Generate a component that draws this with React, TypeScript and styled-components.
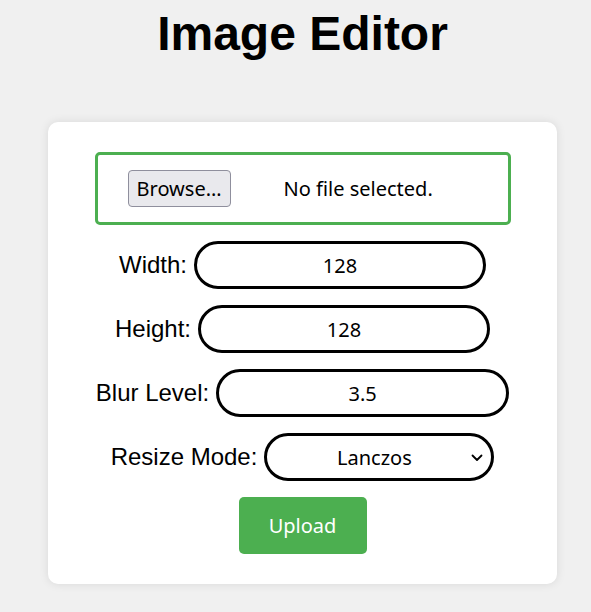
import React from "react";
import styled, { createGlobalStyle } from "styled-components";

const GlobalStyle = createGlobalStyle`
  html, body {
    margin: 0;
    padding: 0;
    background: #f0f0f0;
    font-family: "Liberation Sans", Arial, sans-serif;
  }
`;

const Page = styled.div`
  padding: 6px 0 30px 14px;
  box-sizing: border-box;
`;

const Title = styled.h1`
  margin: 0;
  font-size: 48px;
  line-height: 55px;
  font-weight: 700;
  text-align: center;
  color: #000;
`;

const Card = styled.form`
  width: 509px;
  margin: 61px auto 0;
  padding: 30px 0;
  box-sizing: border-box;
  background: #fff;
  border-radius: 10px;
  box-shadow: 0 0 10px rgba(0, 0, 0, 0.1);
  display: flex;
  flex-direction: column;
  align-items: center;
  gap: 16px;
`;

const FileBox = styled.div`
  width: 416px;
  height: 73px;
  box-sizing: border-box;
  border: 3px solid #4caf50;
  border-radius: 5px;
  display: flex;
  align-items: center;
  padding-left: 30px;
  font-family: "Noto Sans", sans-serif;
  font-size: 20px;
`;

const BrowseButton = styled.button`
  width: 103px;
  height: 37px;
  box-sizing: border-box;
  background: #e9e9ed;
  border: 1px solid #8f8f9d;
  border-radius: 4px;
  font-family: "Noto Sans", sans-serif;
  font-size: 20px;
  color: #000;
  padding: 0;
`;

const FileName = styled.span`
  margin-left: 53px;
  color: #000;
`;

const Row = styled.div`
  display: flex;
  align-items: center;
  gap: 7px;
`;

const Label = styled.label`
  font-size: 24px;
  color: #000;
`;

const TextInput = styled.input<{ $w: number }>`
  width: ${(p) => p.$w}px;
  height: 48px;
  box-sizing: border-box;
  border: 3px solid #000;
  border-radius: 24px;
  font-family: "Noto Sans", sans-serif;
  font-size: 20px;
  color: #000;
  text-align: center;
  padding: 0;
  outline: none;
  background: #fff;
`;

const SelectWrap = styled.div`
  position: relative;
`;

const Select = styled.select`
  width: 230px;
  height: 48px;
  box-sizing: border-box;
  border: 3px solid #000;
  border-radius: 24px;
  font-family: "Noto Sans", sans-serif;
  font-size: 20px;
  color: #000;
  background: #fff;
  appearance: none;
  -webkit-appearance: none;
  text-align: center;
  text-align-last: center;
  padding: 0 10px 0 0;
  outline: none;
`;

const Chevron = styled.svg`
  position: absolute;
  right: 11px;
  top: 21px;
  width: 12px;
  height: 8px;
  pointer-events: none;
`;

const UploadButton = styled.button`
  width: 128px;
  height: 57px;
  background: #4caf50;
  color: #fff;
  border: none;
  border-radius: 5px;
  font-family: "Noto Sans", sans-serif;
  font-size: 20px;
  padding: 0;
`;

export default function App() {
  return (
    <>
      <GlobalStyle />
      <Page>
        <Title>Image Editor</Title>
        <Card onSubmit={(e) => e.preventDefault()}>
          <FileBox>
            <BrowseButton type="button">Browse…</BrowseButton>
            <FileName>No file selected.</FileName>
          </FileBox>
          <Row>
            <Label>Width:</Label>
            <TextInput $w={292} defaultValue="128" />
          </Row>
          <Row>
            <Label>Height:</Label>
            <TextInput $w={292} defaultValue="128" />
          </Row>
          <Row>
            <Label>Blur Level:</Label>
            <TextInput $w={293} defaultValue="3.5" />
          </Row>
          <Row>
            <Label>Resize Mode:</Label>
            <SelectWrap>
              <Select defaultValue="lanczos">
                <option value="nearest">Nearest</option>
                <option value="bilinear">Bilinear</option>
                <option value="bicubic">Bicubic</option>
                <option value="lanczos">Lanczos</option>
              </Select>
              <Chevron viewBox="0 0 12 8">
                <path d="M1.5 1.5 L6 6 L10.5 1.5" fill="none" stroke="#000" strokeWidth="1.8" strokeLinecap="round" strokeLinejoin="round" />
              </Chevron>
            </SelectWrap>
          </Row>
          <UploadButton type="submit">Upload</UploadButton>
        </Card>
      </Page>
    </>
  );
}
